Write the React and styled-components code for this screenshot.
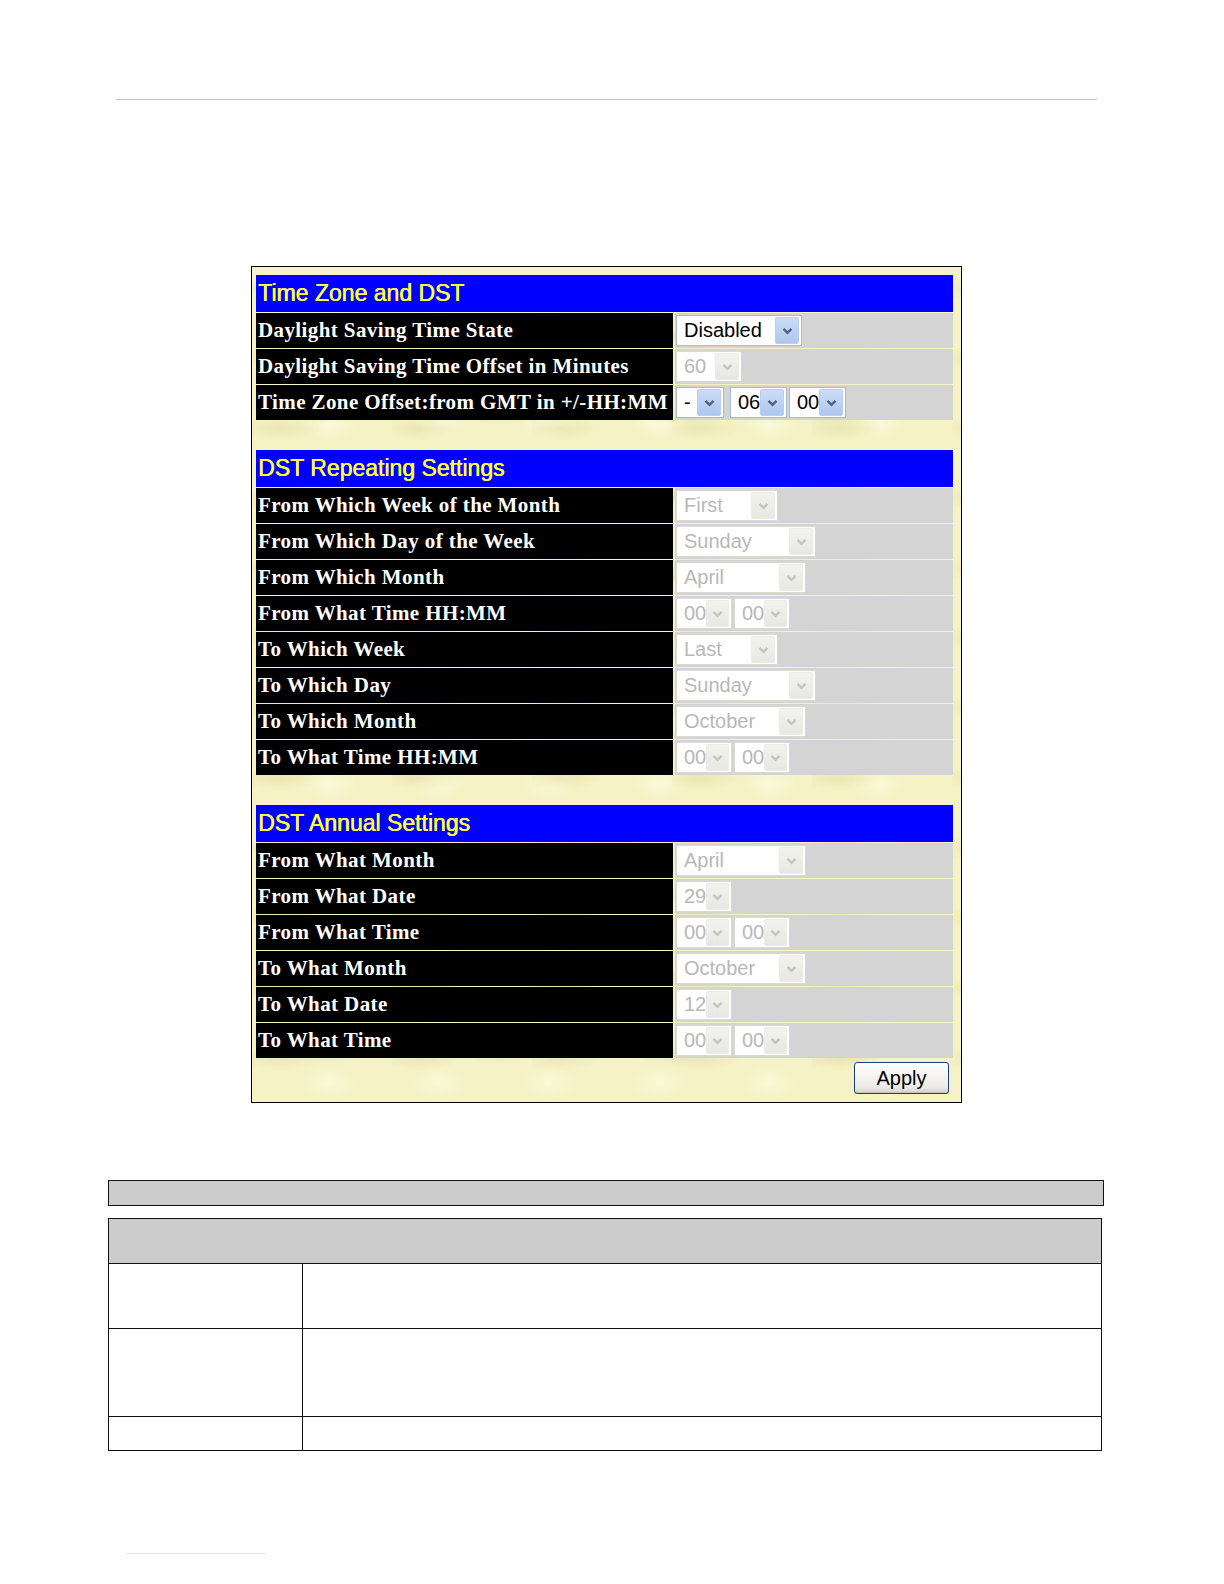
import React from 'react';
import styled, { createGlobalStyle } from 'styled-components';

const GlobalStyle = createGlobalStyle`
  html, body {
    margin: 0;
    padding: 0;
    background: #ffffff;
    width: 1224px;
    height: 1584px;
    overflow: hidden;
  }
`;

const Page = styled.div`
  width: 1224px;
  height: 1584px;
  overflow: hidden;
  font-family: 'Liberation Sans', Arial, sans-serif;
  display: flex;
  flex-direction: column;
`;

const TopRule = styled.div`
  margin: 99px 0 0 116px;
  width: 981px;
  height: 1px;
  flex-shrink: 0;
  background: #c4c4c4;
`;

const Panel = styled.div`
  margin: 166px 0 0 251px;
  width: 697px;
  flex-shrink: 0;
  border: 1px solid #000;
  padding: 8px 8px 8px 4px;
  background-color: #f5f2c6;
  background-image:
    radial-gradient(ellipse 60px 18px at 20% 30%, rgba(222, 214, 150, 0.4), transparent 70%),
    radial-gradient(ellipse 40px 26px at 70% 60%, rgba(255, 255, 228, 0.55), transparent 70%),
    radial-gradient(ellipse 50px 14px at 45% 85%, rgba(222, 214, 150, 0.35), transparent 70%);
  background-size: 140px 70px, 110px 60px, 170px 80px;
  display: flex;
  flex-direction: column;
  gap: 30px;
`;

const Section = styled.div`
  display: flex;
  flex-direction: column;
  gap: 1px;
`;

const SectionHeader = styled.div`
  height: 37px;
  background: #0000ff;
  color: #ffff33;
  font-family: 'Liberation Sans', Arial, sans-serif;
  font-size: 23px;
  line-height: 37px;
  padding-left: 2px;
  text-shadow: 0.6px 0 0 #ffff33;
`;

const Row = styled.div`
  display: grid;
  grid-template-columns: 417px 1fr;
  column-gap: 2px;
  height: 35px;
`;

const Label = styled.div`
  background: #000;
  color: #fff;
  font-family: 'Liberation Serif', 'Times New Roman', serif;
  font-weight: 700;
  font-size: 21px;
  letter-spacing: 0.4px;
  line-height: 35px;
  padding-left: 2px;
  white-space: nowrap;
  overflow: hidden;
`;

const Value = styled.div`
  background: #d4d4d4;
  display: flex;
  align-items: center;
  padding-left: 1px;
  gap: 2px;
`;

const Spacer = styled.span`
  width: ${(p) => p.$w}px;
`;

const SelectBox = styled.div`
  box-sizing: border-box;
  width: ${(p) => p.$w}px;
  height: 31px;
  display: flex;
  align-items: center;
  justify-content: space-between;
  background: #fff;
  border: 1px solid ${(p) => (p.$disabled ? '#dcdad0' : '#a5b9d8')};
  padding: 2px;
`;

const SelectText = styled.span`
  font-family: 'Liberation Sans', Arial, sans-serif;
  font-size: 20px;
  color: ${(p) => (p.$disabled ? '#b8b8b8' : '#000')};
  padding-left: 5px;
`;

const ArrowButton = styled.div`
  width: 22px;
  height: 25px;
  border-radius: 2px;
  display: flex;
  align-items: center;
  justify-content: center;
  background: ${(p) =>
    p.$disabled
      ? 'linear-gradient(#f3f3ee, #e8e8e2)'
      : 'linear-gradient(#cbdcf7, #aec7ef)'};
  border: 1px solid ${(p) => (p.$disabled ? '#ecebe5' : '#b9cdef')};
`;

const ApplyBar = styled.div`
  display: flex;
  justify-content: flex-end;
  margin-top: -26px;
  padding-right: 4px;
`;

const ApplyButton = styled.button`
  width: 95px;
  height: 32px;
  border: 1px solid #1d3c8a;
  border-radius: 3px;
  background: linear-gradient(#ffffff, #ecebe6 80%, #d6d0c5);
  box-shadow: inset 0 -1px 0 #c9c4b8;
  font-family: 'Liberation Sans', Arial, sans-serif;
  font-size: 20px;
  color: #000;
  padding: 0;
`;

const BarTable = styled.div`
  margin: 77px 0 0 108px;
  width: 996px;
  height: 26px;
  flex-shrink: 0;
  box-sizing: border-box;
  border: 1.5px solid #111;
  background: #cccccc;
`;

const InfoTable = styled.div`
  margin: 12px 0 0 108px;
  width: 994px;
  flex-shrink: 0;
  box-sizing: border-box;
  border: 1.5px solid #111;
  display: grid;
  grid-template-columns: 194px 1fr;
`;

const InfoHead = styled.div`
  grid-column: 1 / span 2;
  height: 44px;
  background: #cccccc;
  border-bottom: 1.5px solid #111;
`;

const InfoCell = styled.div`
  height: ${(p) => p.$h}px;
  background: #fff;
  border-bottom: ${(p) => (p.$last ? 'none' : '1.5px solid #111')};
  border-right: ${(p) => (p.$first ? '1.5px solid #111' : 'none')};
`;

const FooterRule = styled.div`
  margin: 102px 0 0 126px;
  width: 140px;
  height: 1px;
  flex-shrink: 0;
  background: #dfe3f1;
`;

function Chevron({ disabled }) {
  const c = disabled ? '#c6c6c0' : '#4d6185';
  return (
    <svg width="11" height="8" viewBox="0 0 11 8">
      <path d="M1.5 1.8 L5.5 5.8 L9.5 1.8" fill="none" stroke={c} strokeWidth="2.4" />
    </svg>
  );
}

function Select({ value, w, disabled }) {
  return (
    <SelectBox $w={w} $disabled={disabled}>
      <SelectText $disabled={disabled}>{value}</SelectText>
      <ArrowButton $disabled={disabled}>
        <Chevron disabled={disabled} />
      </ArrowButton>
    </SelectBox>
  );
}

const zoneRows = [
  { label: 'Daylight Saving Time State', selects: [{ v: 'Disabled', w: 126 }] },
  { label: 'Daylight Saving Time Offset in Minutes', selects: [{ v: '60', w: 66, d: true }] },
  {
    label: 'Time Zone Offset:from GMT in +/-HH:MM',
    selects: [
      { v: '-', w: 48 },
      { v: '06', w: 57, gapBefore: 2 },
      { v: '00', w: 57 },
    ],
  },
];

const hm = [
  { v: '00', w: 56, d: true },
  { v: '00', w: 56, d: true },
];

const repeatRows = [
  { label: 'From Which Week of the Month', selects: [{ v: 'First', w: 102, d: true }] },
  { label: 'From Which Day of the Week', selects: [{ v: 'Sunday', w: 140, d: true }] },
  { label: 'From Which Month', selects: [{ v: 'April', w: 130, d: true }] },
  { label: 'From What Time HH:MM', selects: hm },
  { label: 'To Which Week', selects: [{ v: 'Last', w: 102, d: true }] },
  { label: 'To Which Day', selects: [{ v: 'Sunday', w: 140, d: true }] },
  { label: 'To Which Month', selects: [{ v: 'October', w: 130, d: true }] },
  { label: 'To What Time HH:MM', selects: hm },
];

const annualRows = [
  { label: 'From What Month', selects: [{ v: 'April', w: 130, d: true }] },
  { label: 'From What Date', selects: [{ v: '29', w: 56, d: true }] },
  { label: 'From What Time', selects: hm },
  { label: 'To What Month', selects: [{ v: 'October', w: 130, d: true }] },
  { label: 'To What Date', selects: [{ v: '12', w: 56, d: true }] },
  { label: 'To What Time', selects: hm },
];

function SettingsSection({ title, rows }) {
  return (
    <Section>
      <SectionHeader>{title}</SectionHeader>
      {rows.map((r) => (
        <Row key={r.label}>
          <Label>{r.label}</Label>
          <Value>
            {r.selects.map((s, i) => (
              <React.Fragment key={i}>
                {s.gapBefore ? <Spacer $w={s.gapBefore} /> : null}
                <Select value={s.v} w={s.w} disabled={s.d} />
              </React.Fragment>
            ))}
          </Value>
        </Row>
      ))}
    </Section>
  );
}

export default function App() {
  return (
    <>
      <GlobalStyle />
      <Page>
        <TopRule />
        <Panel>
          <SettingsSection title="Time Zone and DST" rows={zoneRows} />
          <SettingsSection title="DST Repeating Settings" rows={repeatRows} />
          <SettingsSection title="DST Annual Settings" rows={annualRows} />
          <ApplyBar>
            <ApplyButton>Apply</ApplyButton>
          </ApplyBar>
        </Panel>
        <BarTable />
        <InfoTable>
          <InfoHead />
          <InfoCell $h={64} $first />
          <InfoCell $h={64} />
          <InfoCell $h={87} $first />
          <InfoCell $h={87} />
          <InfoCell $h={33} $first $last />
          <InfoCell $h={33} $last />
        </InfoTable>
        <FooterRule />
      </Page>
    </>
  );
}
